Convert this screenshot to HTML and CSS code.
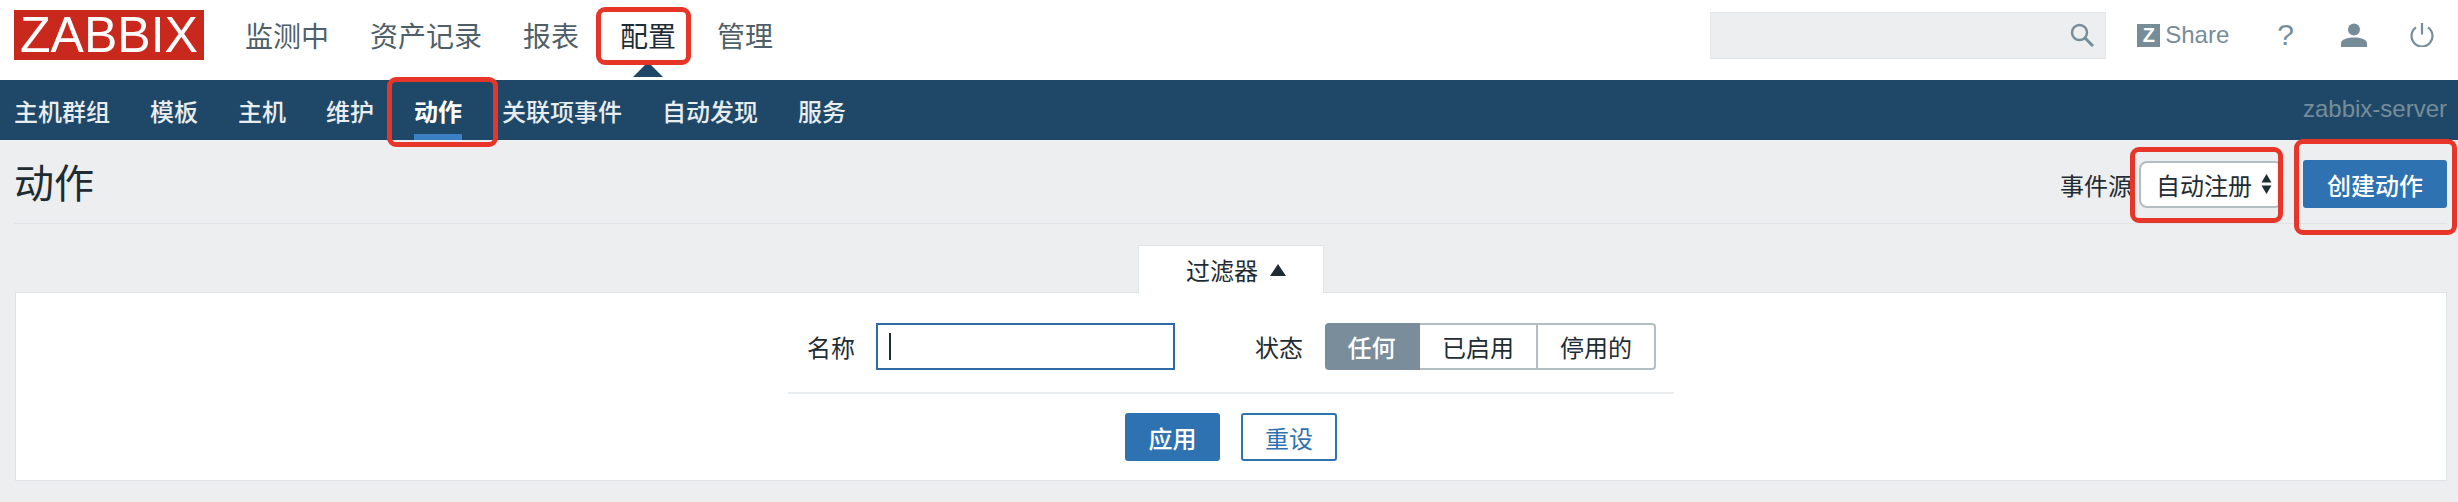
FILE: index.html
```html
<!DOCTYPE html>
<html lang="zh-CN">
<head>
    <meta charset="UTF-8">
    <title>动作</title>
    <link rel="stylesheet" href="styles.css">
</head>
<body>
    <header class="topbar">
        <div class="logo">ZABBIX</div>
        <nav class="main-nav">
            <a>监测中</a>
            <a>资产记录</a>
            <a>报表</a>
            <a class="selected">配置</a>
            <a>管理</a>
        </nav>
        <div class="search">
            <svg width="24" height="24" viewBox="0 0 24 24" fill="none" stroke="#768d99">
                <circle cx="9.5" cy="9.5" r="7.5" stroke-width="2.4"/>
                <path d="M15 15l8 8" stroke-width="3"/>
            </svg>
        </div>
        <a class="share">
            <span class="share-icon">Z</span>
            <span>Share</span>
        </a>
        <a class="help">?</a>
        <svg class="user-icon" width="26" height="24" viewBox="0 0 26 24" fill="#768d99">
            <circle cx="13" cy="6.500" r="6"/>
            <path d="M0 24v-4c0-3 5-5.500 13-5.500s13 2.500 13 5.500v4z"/>
        </svg>
        <svg class="power-icon" width="24" height="24" viewBox="0 0 24 24" fill="none" stroke="#768d99" stroke-width="2.200">
            <path d="M6 4.400A10.500 10.500 0 1 0 18 4.400"/>
            <path d="M12 0v11.500"/>
        </svg>
    </header>

    <nav class="sub-nav">
        <a>主机群组</a>
        <a>模板</a>
        <a>主机</a>
        <a>维护</a>
        <a class="active">动作</a>
        <a>关联项事件</a>
        <a>自动发现</a>
        <a>服务</a>
        <span class="server-name">zabbix-server</span>
    </nav>

    <div class="page-head">
        <h1>动作</h1>
        <div class="head-controls">
            <span>事件源</span>
            <div class="select-box">
                <span>自动注册</span>
                <svg width="11" height="22" viewBox="0 0 11 22" fill="#1f2c33">
                    <path d="M5.500 1l5 8.500H.5z"/>
                    <path d="M5.500 21l5-8.500H.5z"/>
                </svg>
            </div>
            <button class="btn btn-create">创建动作</button>
        </div>
    </div>

    <div class="filter">
        <div class="filter-tab">过滤器 <span class="tab-arrow"></span></div>
        <div class="filter-panel">
            <div class="filter-form">
                <div class="filter-row">
                    <label class="label-name">名称</label>
                    <div class="name-input"><span class="caret"></span></div>
                    <label class="label-state">状态</label>
                    <div class="segments">
                        <span class="seg seg-on">任何</span>
                        <span class="seg">已启用</span>
                        <span class="seg">停用的</span>
                    </div>
                </div>
                <div class="filter-actions">
                    <button class="btn btn-apply">应用</button>
                    <button class="btn btn-reset">重设</button>
                </div>
            </div>
        </div>
    </div>

    <!-- red annotation boxes drawn on the screenshot -->
    <div class="mark mark-config"></div>
    <div class="mark mark-action"></div>
    <div class="mark mark-select"></div>
    <div class="mark mark-create"></div>
</body>
</html>
```

FILE: styles.css
```css
:root {
    --navy: #1f4868;
    --page: #edeef0;
    --line: #dfe4e7;
    --text: #1f2c33;
    --gray: #768d99;
    --blue: #2f72b1;
    --red: #e8352a;
}

* {
    box-sizing: border-box;
    margin: 0;
    padding: 0;
}

body {
    background: var(--page);
    color: var(--text);
    font-family: "Liberation Sans", "Noto Sans CJK SC", sans-serif;
    font-size: 24px;
    height: 502px;
    overflow: hidden;
    position: relative;
}

/* top bar */
.topbar {
    background: #fff;
    height: 80px;
    padding: 0 24px 10px 14px;
    display: flex;
    align-items: center;
}

.logo {
    background: #c9281c;
    color: #fff;
    width: 190px;
    height: 50px;
    font-size: 50px;
    line-height: 50px;
    text-align: center;
}

.main-nav {
    display: flex;
    gap: 41px;
    margin-left: 41px;
    font-size: 28px;
    color: #4f5f69;
}

.main-nav a {
    position: relative;
}

.main-nav .selected {
    color: var(--text);
}

.main-nav .selected::after {
    content: "";
    position: absolute;
    left: 50%;
    top: 47px;
    margin-left: -15px;
    border-left: 15px solid transparent;
    border-right: 15px solid transparent;
    border-bottom: 15px solid var(--navy);
}

.search {
    width: 396px;
    height: 47px;
    margin-left: auto;
    background: var(--page);
    border: 1px solid #e3e6e8;
    display: flex;
    align-items: center;
    justify-content: flex-end;
    padding-right: 11px;
}

.share {
    display: flex;
    align-items: center;
    gap: 5px;
    margin-left: 31px;
    color: var(--gray);
    font-size: 24px;
}

.share-icon {
    width: 23px;
    height: 23px;
    background: var(--gray);
    color: #fff;
    font-size: 20px;
    font-weight: bold;
    line-height: 23px;
    text-align: center;
}

.help {
    margin-left: 48px;
    color: var(--gray);
    font-size: 30px;
}

.user-icon {
    margin-left: 47px;
}

.power-icon {
    margin-left: 43px;
}

/* second level menu */
.sub-nav {
    background: var(--navy);
    height: 60px;
    padding: 0 11px 0 14px;
    display: flex;
    gap: 40px;
    color: #e8edf0;
    font-weight: 500;
}

.sub-nav a {
    display: flex;
    align-items: center;
    position: relative;
}

.sub-nav .active {
    color: #fff;
    font-weight: bold;
}

.sub-nav .active::after {
    content: "";
    position: absolute;
    left: 0;
    right: 0;
    bottom: 0;
    height: 6px;
    background: #3b7fc4;
}

.server-name {
    margin-left: auto;
    color: var(--gray);
    line-height: 58px;
}

/* page title row */
.page-head {
    height: 84px;
    margin: 0 11px 0 14px;
    padding: 20px 0 0;
    border-bottom: 1px solid var(--line);
    display: flex;
    justify-content: space-between;
}

h1 {
    font-size: 40px;
    font-weight: 400;
    line-height: 48px;
}

.head-controls {
    display: flex;
    align-items: center;
    height: 48px;
}

.select-box {
    width: 144px;
    height: 47px;
    margin-left: 7px;
    padding: 0 9px 0 15px;
    background: #fff;
    border: 2px solid #b4bdc2;
    border-radius: 8px;
    display: flex;
    align-items: center;
    justify-content: space-between;
}

.btn {
    font-family: inherit;
    font-size: 24px;
    height: 48px;
    border-radius: 3px;
    border: 2px solid var(--blue);
    cursor: pointer;
}

.btn-create {
    width: 144px;
    margin-left: 20px;
    background: var(--blue);
    color: #fff;
    font-weight: 500;
}

/* filter */
.filter {
    margin: 21px 11px 0 15px;
    display: flex;
    flex-direction: column;
    align-items: center;
}

.filter-tab {
    width: 186px;
    height: 48px;
    margin-bottom: -1px;
    position: relative;
    z-index: 1;
    background: #fff;
    border: 1px solid var(--line);
    border-bottom: none;
    display: flex;
    align-items: center;
    justify-content: center;
    gap: 12px;
    padding-left: 10px;
}

.tab-arrow {
    border-left: 8px solid transparent;
    border-right: 8px solid transparent;
    border-bottom: 12px solid var(--text);
}

.filter-panel {
    align-self: stretch;
    height: 189px;
    padding-top: 30px;
    background: #fff;
    border: 1px solid var(--line);
}

.filter-form {
    width: 886px;
    margin: 0 auto;
}

.filter-row {
    display: flex;
    align-items: center;
    padding: 0 0 22px 19px;
    border-bottom: 2px solid #e9edef;
}

.name-input {
    width: 299px;
    height: 47px;
    margin-left: 21px;
    padding-left: 11px;
    border: 2px solid #2c6ba5;
    display: flex;
    align-items: center;
}

.caret {
    width: 2px;
    height: 27px;
    background: var(--text);
}

.label-state {
    margin-left: 80px;
}

.segments {
    display: flex;
    margin-left: 22px;
    height: 47px;
}

.seg {
    width: 118px;
    display: flex;
    align-items: center;
    justify-content: center;
    border: 2px solid #b4bdc2;
    border-left: none;
}

.seg:last-child {
    border-radius: 0 4px 4px 0;
}

.seg-on {
    width: 95px;
    background: #7a8d9a;
    border-color: #7a8d9a;
    border-radius: 4px 0 0 4px;
    color: #fff;
    font-weight: 500;
}

.filter-actions {
    display: flex;
    justify-content: center;
    gap: 21px;
    padding-top: 19px;
}

.btn-apply {
    width: 95px;
    background: var(--blue);
    color: #fff;
    font-weight: 500;
}

.btn-reset {
    width: 96px;
    background: #fff;
    color: var(--blue);
}

/* annotations */
.mark {
    position: absolute;
    border: 5px solid var(--red);
    border-radius: 9px;
    z-index: 2;
}

.mark-config {
    left: 596px;
    top: 7px;
    width: 95px;
    height: 58px;
}

.mark-action {
    left: 387px;
    top: 77px;
    width: 111px;
    height: 70px;
}

.mark-select {
    left: 2130px;
    top: 147px;
    width: 153px;
    height: 76px;
}

.mark-create {
    left: 2294px;
    top: 139px;
    width: 163px;
    height: 96px;
}
```
